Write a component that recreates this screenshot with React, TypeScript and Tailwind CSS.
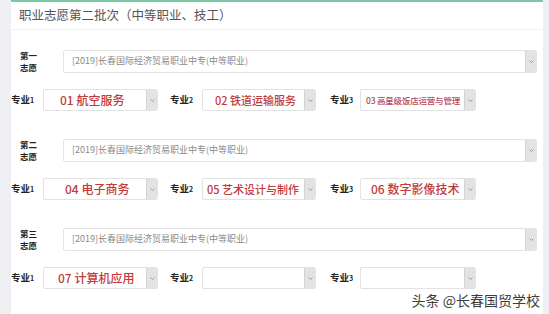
const font = "font-['Noto_Sans_CJK_SC','Noto_Sans',sans-serif]"

type Major = { text?: string; size?: string; color?: string; pad?: string }

type Choice = {
  order: string
  school: string
  majors: Major[]
}

const choices: Choice[] = [
  {
    order: "第一",
    school: "[2019]长春国际经济贸易职业中专(中等职业)",
    majors: [
      { text: "01 航空服务", pad: "pl-[16px]" },
      { text: "02 铁道运输服务", size: "text-[11px]", pad: "pl-[12px]" },
      { text: "03 高星级饭店运营与管理", size: "text-[8.5px] tracking-[-0.2px]", color: "text-[#b8485a]", pad: "pl-[5px]" },
    ],
  },
  {
    order: "第二",
    school: "[2019]长春国际经济贸易职业中专(中等职业)",
    majors: [
      { text: "04 电子商务", pad: "pl-[21px]" },
      { text: "05 艺术设计与制作", size: "text-[11px]", pad: "pl-[4px]" },
      { text: "06 数字影像技术", pad: "pl-[10px]" },
    ],
  },
  {
    order: "第三",
    school: "[2019]长春国际经济贸易职业中专(中等职业)",
    majors: [{ text: "07 计算机应用", pad: "pl-[14px]" }, {}, {}],
  },
]

function Arrow() {
  return (
    <div className="flex w-[11px] shrink-0 items-center justify-center rounded-r-[2px] border-l border-[#d4d4d4] bg-[#e3e3e3]">
      <svg width="5" height="3" viewBox="0 0 5 3">
        <path d="M0.5 0.5 L2.5 2.5 L4.5 0.5" stroke="#8a8a8a" fill="none" strokeWidth="0.8" />
      </svg>
    </div>
  )
}

function MajorSelect({ major, width }: { major: Major; width: string }) {
  return (
    <div className={`flex h-[22px] ${width} shrink-0 overflow-hidden rounded-[2px] border border-[#e2e2e2] bg-white`}>
      <div
        className={`flex min-w-0 flex-1 items-center overflow-hidden whitespace-nowrap ${major.pad ?? ""} ${major.size ?? "text-[12px]"} ${major.color ?? "text-[#c23b3b]"} font-medium`}
      >
        {major.text}
      </div>
      <Arrow />
    </div>
  )
}

function MajorLabel({ n, className }: { n: number; className: string }) {
  return (
    <div className={`flex shrink-0 items-baseline text-[9.5px] font-bold leading-none text-[#222] ${className}`}>
      专业<span className="text-[7px]">{n}</span>
    </div>
  )
}

function ChoiceBlock({ choice }: { choice: Choice }) {
  return (
    <div className="flex flex-col gap-[16px]">
      <div className="flex items-center">
        <div className="ml-[9px] w-[43px] text-[8.5px] font-bold leading-[12px] text-[#222]">
          <div>{choice.order}</div>
          <div>志愿</div>
        </div>
        <div className="flex h-[23px] w-[474px] overflow-hidden rounded-[2px] border border-[#e4e4e4] bg-white">
          <div className="flex flex-1 items-center pl-[8px] text-[9px] text-[#8a8a8a]">{choice.school}</div>
          <Arrow />
        </div>
      </div>
      <div className="flex items-center">
        <MajorLabel n={1} className="w-[32px]" />
        <MajorSelect major={choice.majors[0]} width="w-[115px]" />
        <MajorLabel n={2} className="ml-[12px] w-[32px]" />
        <MajorSelect major={choice.majors[1]} width="w-[114px]" />
        <MajorLabel n={3} className="ml-[14px] w-[30px]" />
        <MajorSelect major={choice.majors[2]} width="w-[116px]" />
      </div>
    </div>
  )
}

export default function App() {
  return (
    <div className={`relative flex h-[314px] w-[549px] overflow-hidden bg-[#eef0f4] ${font}`}>
      <div className="w-[11px] shrink-0" />
      <div className="flex w-[532px] shrink-0 flex-col border-t-2 border-[#79c9a5] bg-white">
        <div className="flex h-[28px] items-center border-b border-[#f1f1f1] pl-[8px] text-[12.5px] text-[#555]">
          职业志愿第二批次（中等职业、技工）
        </div>
        <div className="flex flex-col gap-[27px] pt-[19px]">
          {choices.map((c) => (
            <ChoiceBlock key={c.order} choice={c} />
          ))}
        </div>
      </div>
      <div className="absolute bottom-[7px] right-[9px] text-[14px] leading-none text-[#3c3c3c] [text-shadow:0_0_2px_#fff,0_0_2px_#fff]">
        头条 @长春国贸学校
      </div>
    </div>
  )
}
